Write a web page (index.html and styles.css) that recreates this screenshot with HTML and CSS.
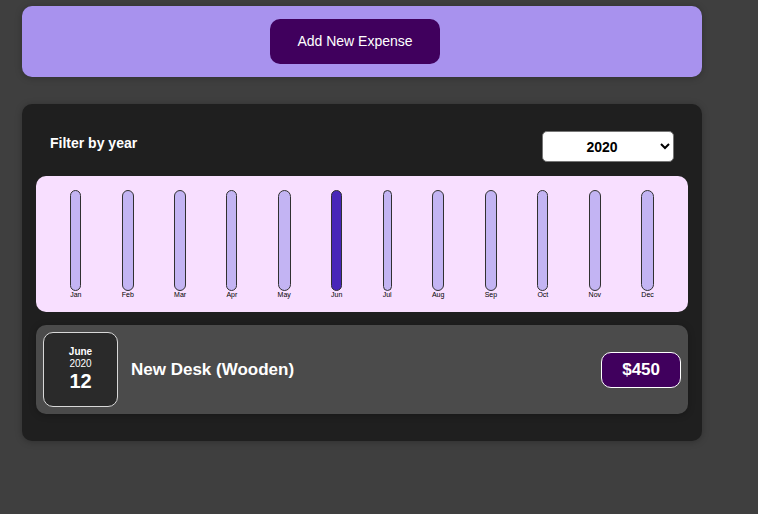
FILE: index.html
```html
<!DOCTYPE html>
<html lang="en">
<head>
  <meta charset="utf-8">
  <meta name="viewport" content="width=device-width, initial-scale=1">
  <title>Expenses</title>
  <link rel="stylesheet" href="styles.css">
</head>
<body>
  <main class="page">
    <section class="card new-expense">
      <button type="button" class="new-expense__button">Add New Expense</button>
    </section>
    <section class="card expenses">
      <div class="filter">
        <label class="filter__label" for="year">Filter by year</label>
        <select class="filter__select" id="year">
          <option>2022</option>
          <option>2021</option>
          <option selected>2020</option>
          <option>2019</option>
        </select>
      </div>
      <div class="chart">
        <div class="chart__month"><div class="chart__bar"></div><span class="chart__label">Jan</span></div>
        <div class="chart__month"><div class="chart__bar"></div><span class="chart__label">Feb</span></div>
        <div class="chart__month"><div class="chart__bar"></div><span class="chart__label">Mar</span></div>
        <div class="chart__month"><div class="chart__bar"></div><span class="chart__label">Apr</span></div>
        <div class="chart__month"><div class="chart__bar"></div><span class="chart__label">May</span></div>
        <div class="chart__month"><div class="chart__bar chart__bar--full"></div><span class="chart__label">Jun</span></div>
        <div class="chart__month"><div class="chart__bar"></div><span class="chart__label">Jul</span></div>
        <div class="chart__month"><div class="chart__bar"></div><span class="chart__label">Aug</span></div>
        <div class="chart__month"><div class="chart__bar"></div><span class="chart__label">Sep</span></div>
        <div class="chart__month"><div class="chart__bar"></div><span class="chart__label">Oct</span></div>
        <div class="chart__month"><div class="chart__bar"></div><span class="chart__label">Nov</span></div>
        <div class="chart__month"><div class="chart__bar"></div><span class="chart__label">Dec</span></div>
      </div>
      <ul class="list">
        <li class="item">
          <time class="date" datetime="2020-06-12">
            <span class="date__month">June</span>
            <span class="date__year">2020</span>
            <span class="date__day">12</span>
          </time>
          <h2 class="item__title">New Desk (Wooden)</h2>
          <div class="item__price">$450</div>
        </li>
      </ul>
    </section>
  </main>
</body>
</html>
```
FILE: styles.css
```css
* {
  box-sizing: border-box;
}

body {
  margin: 0;
  background: #3f3f3f;
  color: #fff;
  font-family: "Liberation Sans", Arial, sans-serif;
}

.page {
  display: flex;
  flex-direction: column;
  gap: 27px;
  padding: 6px 56px 24px 22px;
}

.card {
  border-radius: 10px;
  box-shadow: 0 1px 7px rgba(0, 0, 0, 0.25);
}

.new-expense {
  padding: 13px;
  background: #a892ee;
  text-align: center;
}

.new-expense__button {
  display: inline-block;
  margin-right: 14px;
  padding: 14px 27px;
  border: 0;
  border-radius: 10px;
  background: #40005d;
  color: #fff;
  font: 14px/17px "Liberation Sans", Arial, sans-serif;
  vertical-align: top;
  cursor: pointer;
}

.expenses {
  padding: 14px 14px 27px;
  background: #1f1f1f;
}

.filter {
  display: flex;
  align-items: center;
  justify-content: space-between;
  padding: 13px 14px 14px;
}

.filter__label {
  font-size: 14px;
  font-weight: bold;
  line-height: 16px;
  padding-bottom: 7px;
}

.filter__select {
  width: 132px;
  height: 31px;
  padding: 0 10px;
  border: 1px solid #767676;
  border-radius: 5px;
  background: #fff;
  color: #000;
  font: bold 14px "Liberation Sans", Arial, sans-serif;
  text-align: center;
}

.chart {
  display: flex;
  justify-content: space-around;
  padding: 14px;
  border-radius: 10px;
  background: #f8dfff;
  color: #000;
}

.chart__month {
  display: flex;
  flex-direction: column;
}

.chart__bar {
  height: 101px;
  border: 1px solid #313131;
  border-radius: 10px;
  background: #c3b4f3;
}

.chart__bar--full {
  background: #4826b9;
}

.chart__label {
  font-size: 7px;
  line-height: 7px;
}

.list {
  margin: 13px 0 0;
  padding: 0;
  list-style: none;
}

.item {
  display: flex;
  align-items: center;
  gap: 13px;
  padding: 7px;
  border-radius: 10px;
  background: #4b4b4b;
  box-shadow: 0 1px 7px rgba(0, 0, 0, 0.25);
}

.date {
  display: flex;
  flex-direction: column;
  align-items: center;
  justify-content: center;
  width: 75px;
  height: 75px;
  border: 1px solid #d8d8d8;
  border-radius: 10px;
  background: #2a2a2a;
}

.date__month,
.date__year {
  font-size: 10px;
  line-height: 12px;
}

.date__month,
.date__day {
  font-weight: bold;
}

.date__day {
  font-size: 20px;
  line-height: 23px;
}

.item__title {
  flex: 1;
  margin: 0;
  font-size: 17px;
  line-height: 20px;
}

.item__price {
  padding: 7px 20px;
  border: 1px solid #fff;
  border-radius: 10px;
  background: #40005d;
  font-size: 17px;
  font-weight: bold;
  line-height: 20px;
}
```
